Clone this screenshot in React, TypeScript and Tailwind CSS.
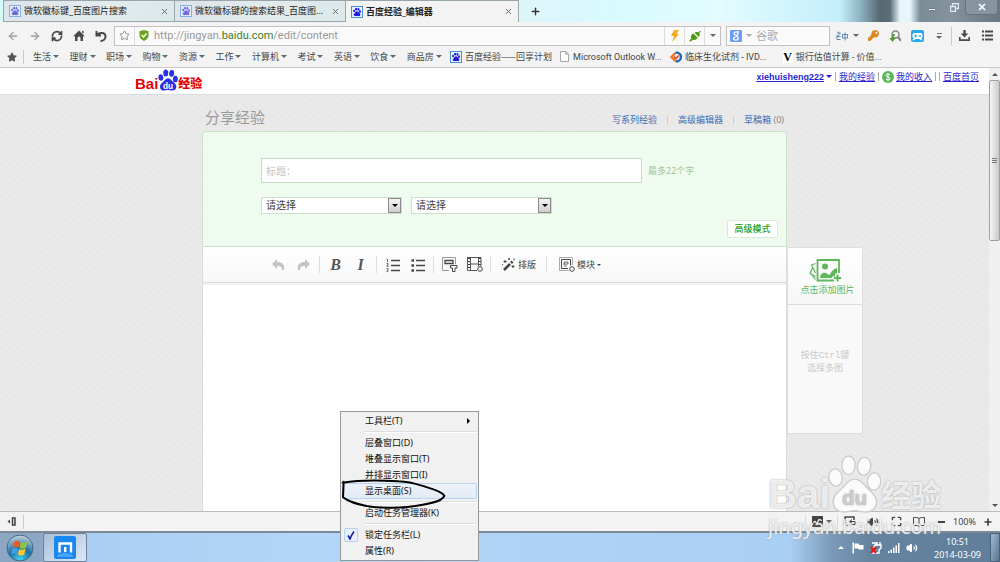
import { useState, type ReactNode } from 'react';
import { ArrowLeft, ArrowRight, Maximize, Plus, RefreshCw, Star, Volume2, X } from 'lucide-react';
import { FaKey, FaStar } from 'react-icons/fa';

interface Tab {
  id: number;
  title: string;
}

const TABS: Tab[] = [
  { id: 1, title: '微软徽标键_百度图片搜索' },
  { id: 2, title: '微软徽标键的搜索结果_百度图...' },
  { id: 3, title: '百度经验_编辑器' },
];

const FOLDERS = ['生活', '理财', '职场', '购物', '资源', '工作', '计算机', '考试', '英语', '饮食', '商品房'];

function PawShape() {
  return (
    <>
      <ellipse cx="285" cy="110" rx="20" ry="26" transform="rotate(-8 285 110)" />
      <ellipse cx="324" cy="73" rx="20" ry="28" />
      <ellipse cx="371" cy="76" rx="20" ry="27" transform="rotate(8 371 76)" />
      <ellipse cx="401" cy="122" rx="20" ry="26" transform="rotate(4 401 122)" />
      <path d="M342 115c-20 0-28 20-42 32-18 14-22 22-22 38 0 18 14 29 32 29 12 0 20-4 32-4s20 4 34 4c20 0 33-12 33-30 0-16-10-26-24-38-14-12-21-31-43-31z" />
    </>
  );
}

function Favicon({ faded }: { faded?: boolean }) {
  return (
    <svg viewBox="0 0 12 12" className={`size-3 shrink-0 ${faded ? 'opacity-60' : ''}`}>
      <rect x="0.5" y="0.5" width="11" height="11" fill="#e8f2ff" stroke="#4a90d9" />
      <svg x="2" y="1.5" width="8" height="9" viewBox="262 42 160 175" fill="#2319dc">
        <PawShape />
      </svg>
    </svg>
  );
}

function Caret({ className = 'text-[#666]' }: { className?: string }) {
  return (
    <svg viewBox="0 0 6 3" className={`h-[3px] w-[6px] shrink-0 ${className}`} fill="currentColor">
      <path d="M0 0h6L3 3z" />
    </svg>
  );
}

function IconButton({ label, className, children }: { label: string; className: string; children: ReactNode }) {
  return (
    <button type="button" aria-label={label} className={`flex shrink-0 items-center justify-center ${className}`}>
      {children}
    </button>
  );
}

function TitleBar() {
  const [active, setActive] = useState(3);

  return (
    <div className="flex h-[22px] shrink-0 bg-[linear-gradient(90deg,#d5fbf9_0,#dff4f8_50%,#d8fbff_62%,#e2fcff_72%,#c4eefb_84%,#8fb4c3_86%,#566872_88%,#5b6d78_89%,#e8f6fb_90%,#e8f6fb_91%,#7b8c97_92%,#84939d_95%,#687782_100%)] pl-[3px]">
      {TABS.map((tab) => (
        <div
          key={tab.id}
          className={`flex shrink-0 items-center border-t border-l border-[#98a6ab] pr-[4px] pl-[5px] ${
            tab.id === active
              ? 'w-[174px] border-r bg-[#f3f3f3]'
              : 'w-[171px] border-b bg-[linear-gradient(90deg,#dde4ea,#e2ebed_55%,#dce8ea)]'
          }`}
        >
          <button type="button" onClick={() => setActive(tab.id)} className="flex min-w-0 flex-1 items-center gap-[3px]">
            <Favicon faded={tab.id !== active} />
            <span className={`truncate text-[9px] leading-[12px] text-[#222] ${tab.id === active ? 'font-bold' : ''}`}>
              {tab.title}
            </span>
          </button>
          <IconButton label="关闭标签页" className="size-3 text-[#666]">
            <X className="size-[9px]" strokeWidth={2.5} />
          </IconButton>
        </div>
      ))}
      <IconButton label="新标签页" className="w-8 text-[#333]">
        <Plus className="size-[11px]" strokeWidth={3} />
      </IconButton>
      <div className="ml-auto flex h-[15px] pr-[2px] text-white">
        <IconButton label="最小化" className="w-[22px]">
          <span className="mt-1 h-[3px] w-2 rounded-sm border border-[#66757f] bg-white" />
        </IconButton>
        <IconButton label="还原" className="w-[22px]">
          <svg viewBox="0 0 9 9" className="size-[9px]" fill="none" stroke="#e6edf2">
            <path d="M2.500 2.500v-2h6v5h-2M0.500 3.500h5v5h-5z" strokeWidth="1.300" />
          </svg>
        </IconButton>
        <IconButton label="关闭" className="w-[33px] rounded-b-sm border border-t-0 border-[#66747d] bg-[#8795a0]">
          <X className="size-[10px]" strokeWidth={4} />
        </IconButton>
      </div>
    </div>
  );
}

function AddressBar() {
  return (
    <div className="flex h-[24px] shrink-0 items-center pt-[3px] text-[#4a4a4a]">
      <div className="flex w-[114px] shrink-0 pl-[2px]">
        <IconButton label="后退" className="w-[22px] text-[#aaa]">
          <ArrowLeft className="size-[12px]" strokeWidth={3.5} />
        </IconButton>
        <IconButton label="前进" className="w-[22px] text-[#aaa]">
          <ArrowRight className="size-[12px]" strokeWidth={3.5} />
        </IconButton>
        <IconButton label="刷新" className="w-[22px]">
          <RefreshCw className="size-[12px]" strokeWidth={3.5} />
        </IconButton>
        <IconButton label="主页" className="w-[22px]">
          <svg viewBox="0 0 12 12" className="size-3" fill="currentColor">
            <path d="M6 0.500L11.800 6.300H10V11H7.500V8a1.500 1.500 0 0 0-3 0V11H2V6.300H0.200zM9 1h1.500v3L9 2.500z" />
          </svg>
        </IconButton>
        <IconButton label="撤销关闭" className="w-[22px]">
          <svg viewBox="0 0 12 12" className="size-3" fill="none" stroke="currentColor" strokeWidth="2">
            <path d="M1.500 1v4.500H6M2 5c2-2.500 8-3 8.500 1 .3 3-2 5-5 5" />
          </svg>
        </IconButton>
      </div>
      <div className="flex h-[20px] min-w-0 flex-1 items-center border border-[#c3c3c3] bg-[#fafafa]">
        <IconButton label="收藏" className="w-[19px] text-[#888]">
          <Star className="size-[11px]" strokeWidth={2} />
        </IconButton>
        <div className="flex h-full flex-1 items-center gap-[5px] border-l border-[#ddd] pl-[4px]">
          <svg viewBox="0 0 10 11" className="h-[11px] w-[10px]">
            <path d="M5 0l4.500 1.300V5.500C9.500 8 7.500 10 5 11 2.500 10 0.500 8 0.500 5.500V1.300z" fill="#6aa51c" />
            <path d="M2.700 5l1.800 2 3-3.500" fill="none" stroke="#fff" strokeWidth="1.400" />
          </svg>
          <a href="http://jingyan.baidu.com/edit/content" className="font-['Roboto'] text-[11px] leading-[14px] text-[#999]">
            http://jingyan.<span className="text-[#3f7d1c]">baidu.com</span>/edit/content
          </a>
        </div>
        <IconButton label="加速" className="h-full w-[20px] border-l border-[#ddd]">
          <svg viewBox="0 0 10 12" className="h-[12px] w-[10px]" fill="#f0ad1e">
            <path d="M4 0h5L6.500 4H9L2 12l2-6H1z" />
          </svg>
        </IconButton>
        <IconButton label="连接" className="h-full w-[20px] border-l border-[#ddd]">
          <svg viewBox="0 0 12 12" className="size-3" fill="#4f9a14">
            <path d="M0.300 10.500l2-2.200c-1-2 .2-4.300 2.200-4.800l4 4c-.5 2-2.800 3.200-4.800 2.200l-2 2z" />
            <path d="M5.500 2.800c1-1 2.700-1.200 4-.5l1.500-1.600.9.900-1.600 1.500c.7 1.300.5 3-.5 4z" />
          </svg>
        </IconButton>
        <IconButton label="更多" className="h-full w-[16px] border-l border-[#ddd]">
          <Caret />
        </IconButton>
      </div>
      <div className="ml-[5px] flex h-[20px] w-[104px] shrink-0 items-center gap-[4px] border border-[#c3c3c3] bg-[#fafafa] pl-[3px]">
        <svg viewBox="0 0 12 12" className="size-3 shrink-0">
          <rect width="12" height="12" rx="1" fill="#6c9bf0" />
          <path
            d="M9 1.800H6.200c-1.300 0-2.200.7-2.200 1.800s.8 1.700 1.900 1.700S8 4.600 8 3.500 7.300 1.900 6.500 1.900M6 5.300c0 1 2.300 1.200 2.300 2.900 0 1.200-1.100 1.900-2.500 1.900s-2.300-.6-2.300-1.500c0-1.200 1.500-1.600 3-1.600"
            fill="none"
            stroke="#fff"
            strokeWidth="1.200"
          />
        </svg>
        <Caret className="text-[#aaa]" />
        <input
          aria-label="搜索"
          placeholder="谷歌"
          className="w-full min-w-0 bg-transparent text-[11px] leading-[14px] outline-none placeholder:text-[#aaa]"
        />
      </div>
      <div className="flex h-full shrink-0 items-center pr-[2px] pl-[3px]">
        <IconButton label="翻译" className="w-[29px] gap-[5px] text-[#5f8bb5]">
          <svg viewBox="0 0 12 10" className="h-[10px] w-[12px]" fill="none" stroke="currentColor">
            <path d="M1 2h3.500M2.500 0.500v1.500M4.500 2L1 5.500h3.500M1 4v4.500h3.500M6.500 3.500h5v3.500h-5zM9 1.500v8" />
          </svg>
          <Caret />
        </IconButton>
        <IconButton label="密码" className="w-[22px] text-[#d98a1e]">
          <FaKey className="size-[11px] -scale-x-100 rotate-90" />
        </IconButton>
        <IconButton label="嗅探" className="w-[22px] text-[#777]">
          <svg viewBox="0 0 12 12" className="size-3" fill="none">
            <circle cx="6.500" cy="4.500" r="3.500" stroke="#888" strokeWidth="1.500" />
            <path d="M9 7l3 4" stroke="#777" strokeWidth="2" />
            <path d="M6 4c-3 0-3.500 2-3.500 4H0.500l3 4 3-4H4.500c0-2 .5-2.500 1.500-2.500z" fill="#4f9a34" />
          </svg>
        </IconButton>
        <IconButton label="游戏" className="w-[22px]">
          <svg viewBox="0 0 13 12" className="h-3 w-[13px]">
            <rect width="13" height="12" rx="2" fill="#2ba7ee" />
            <rect x="1.500" y="3" width="10" height="5.500" rx="2" fill="#fff" />
            <path d="M2 10l3-2h3l3 2" stroke="#fff" strokeWidth="1.400" fill="none" />
            <path d="M3 6h3M4.500 4.500v3" stroke="#2ba7ee" />
            <circle cx="9" cy="6" r="1" fill="#2ba7ee" />
          </svg>
        </IconButton>
        <IconButton label="扩展" className="w-[22px] flex-col gap-[2px]">
          <span className="h-px w-[5px] bg-[#777]" />
          <Caret />
        </IconButton>
        <span className="ml-px h-[18px] w-px bg-[#ccc]" />
        <IconButton label="下载" className="w-[24px]">
          <svg viewBox="0 0 11 11" className="size-[11px]" fill="currentColor">
            <path d="M4.300 0h2.400v3.500h2.600L5.500 7.500 1.700 3.500h2.600zM0 7h1.600v2.300h7.800V7H11v4H0z" />
          </svg>
        </IconButton>
        <IconButton label="菜单" className="w-[22px]">
          <svg viewBox="0 0 11 11" className="size-[11px]" fill="currentColor">
            <path d="M0 0.500h2v2H0zM3 0.500h8v2H3zM0 4.500h2v2H0zM3 4.500h8v2H3zM0 8.500h2v2H0zM3 8.500h8v2H3z" />
          </svg>
        </IconButton>
      </div>
    </div>
  );
}

function BookmarkBar() {
  return (
    <div className="flex h-[22px] shrink-0 items-center border-b border-[#c9c9c9] font-['Roboto','Noto_Sans_CJK_SC',sans-serif] text-[9px] leading-[12px] whitespace-nowrap text-[#444]">
      <IconButton label="收藏夹" className="w-[23px] text-[#555]">
        <FaStar className="size-[10px]" />
      </IconButton>
      <span className="h-[14px] w-px bg-[#ccc]" />
      <nav className="ml-[9px] flex w-[409px] shrink-0 justify-between">
        {FOLDERS.map((name) => (
          <button key={name} type="button" className="flex items-center gap-[2px]">
            {name}
            <Caret />
          </button>
        ))}
      </nav>
      <a href="#plan" className="ml-[8px] flex items-center gap-[3px] font-['Noto_Sans_CJK_SC',sans-serif]">
        <Favicon />
        百度经验——回享计划
      </a>
      <a href="#outlook" className="ml-[8px] flex items-center gap-[4px]">
        <svg viewBox="0 0 10 12" className="h-[11px] w-[9px]" fill="#fff" stroke="#999">
          <path d="M0.500 0.500h6l3 3v8h-9zM6.500 0.500v3h3" />
        </svg>
        Microsoft Outlook W...
      </a>
      <a href="#ivd" className="ml-[8px] flex items-center gap-[3px]">
        <svg viewBox="0 0 12 12" className="size-3" fill="none" strokeWidth="2.400">
          <path d="M6 1.500L1.500 6 6 10.500" stroke="#e8762b" />
          <path d="M6 1.500c3 0 5 2 5 4.500s-2 4.500-5 4.500" stroke="#2767b5" />
          <path d="M4 5.500l2 2 3-3" stroke="#e8452b" strokeWidth="1.600" />
        </svg>
        临床生化试剂 - IVD...
      </a>
      <a href="#bank" className="ml-[16px] flex items-center gap-[3px]">
        <span className="w-[10px] bg-white text-center font-['Liberation_Serif'] text-[12px] leading-[12px] font-bold text-black">V</span>
        银行估值计算 - 价值...
      </a>
    </div>
  );
}

function Pipe() {
  return <span className="h-[9px] w-px bg-[#aaa]" />;
}

function SiteHeader() {
  return (
    <header className="flex h-[27px] shrink-0 justify-between border-b border-[#ddd] bg-white pr-[10px] pl-[135px]">
      <a href="#home" aria-label="百度经验" className="flex items-end pb-[3px] font-bold text-[#e10602]">
        <span className="font-['Liberation_Sans'] text-[15px] leading-[14px]">Bai</span>
        <svg viewBox="262 42 160 175" className="h-[22px] w-[20px]" fill="#2932e1">
          <PawShape />
          <text x="342" y="200" textAnchor="middle" fill="#fff" fontSize="66" fontWeight="700" fontFamily="Liberation Sans">
            du
          </text>
        </svg>
        <span className="text-[12px] leading-[15px] font-black">经验</span>
      </a>
      <nav className="flex h-[17px] items-center gap-[3px] text-[9px] leading-[12px] text-[#2a1fd0]">
        <a href="#user" className="flex items-center gap-[2px] font-['Liberation_Sans'] font-bold underline">
          xiehuisheng222
          <Caret className="text-[#2a1fd0]" />
        </a>
        <Pipe />
        <a href="#exp" className="underline">我的经验</a>
        <Pipe />
        <a href="#income" className="flex items-center gap-[2px] underline">
          <svg viewBox="0 0 12 12" className="size-3">
            <circle cx="6" cy="6" r="6" fill="#5cb85a" />
            <path d="M8 3.800C7 2.800 4 2.800 4 4.500s4 1.300 4 3S5 9.200 4 8.200M6 2v8" stroke="#fff" fill="none" />
          </svg>
          我的收入
        </a>
        <Pipe />
        <Pipe />
        <a href="#index" className="underline">百度首页</a>
      </nav>
    </header>
  );
}

function Dropdown({ label }: { label: string }) {
  return (
    <div className="relative h-[17px] w-[141px]">
      <select
        aria-label={label}
        className="block h-full w-full appearance-none border border-[#cbe2ca] bg-white pl-[4px] text-[10px] leading-[15px] text-[#444] outline-none"
      >
        <option>请选择</option>
      </select>
      <span className="pointer-events-none absolute inset-y-px right-px flex w-[13px] items-center justify-center border border-[#8a8a8a] bg-linear-to-b from-[#f4f4f4] to-[#cfcfcf]">
        <Caret className="text-black" />
      </span>
    </div>
  );
}

function Divider() {
  return (
    <span className="flex w-[7px] shrink-0 justify-center">
      <span className="h-[17px] w-px bg-[#ddd]" />
    </span>
  );
}

function EditorToolbar() {
  return (
    <div className="flex h-[36px] items-center border-b border-[#ddd] bg-linear-to-b from-white to-[#f7f7f7] pl-[63px] text-[#444]">
      <IconButton label="撤销" className="w-[25px] text-[#c4c4c4]">
        <svg viewBox="0 0 13 12" className="h-[12px] w-[13px]" fill="currentColor">
          <path d="M5 0v3c5 0 8 2 7 8h-2c0-3-1-4-5-4v3L0 5z" />
        </svg>
      </IconButton>
      <IconButton label="重做" className="w-[25px] text-[#c4c4c4]">
        <svg viewBox="0 0 13 12" className="h-[12px] w-[13px]" fill="currentColor">
          <path d="M8 0v3c-5 0-8 2-7 8h2c0-3 1-4 5-4v3l5-5z" />
        </svg>
      </IconButton>
      <Divider />
      <IconButton label="加粗" className="w-[25px] font-['Liberation_Serif'] text-[16px] leading-[18px] font-bold text-[#555] italic">
        B
      </IconButton>
      <IconButton label="斜体" className="w-[25px] font-['Liberation_Serif'] text-[16px] leading-[18px] font-bold text-[#555] italic">
        I
      </IconButton>
      <Divider />
      <IconButton label="有序列表" className="w-[25px]">
        <svg viewBox="0 0 14 14" className="size-[14px]" fill="none" stroke="currentColor">
          <path d="M5 2.500h9M5 7.500h9M5 12.500h9" strokeWidth="1.600" />
          <path d="M0.500 1h1v3M0.500 5.500h1.500v1.500h-1v1.500h1.500M0.500 10.500h1.500v3h-1.500M1 12h1" strokeWidth="0.700" />
        </svg>
      </IconButton>
      <IconButton label="无序列表" className="w-[25px]">
        <svg viewBox="0 0 14 14" className="size-[14px]" fill="none" stroke="currentColor">
          <path d="M5 2.500h9M5 7.500h9M5 12.500h9" strokeWidth="1.600" />
          <path d="M0.500 2.500h2.500M0.500 7.500h2.500M0.500 12.500h2.500" strokeWidth="2.500" />
        </svg>
      </IconButton>
      <Divider />
      <IconButton label="插入标题" className="w-[25px]">
        <svg viewBox="0 0 16 15" className="h-[15px] w-[16px]" fill="none" stroke="currentColor">
          <path d="M7 13.500H0.500v-13h13V7" stroke="#999" />
          <path d="M3 3.500h8v3H3z" strokeWidth="1.300" />
          <path d="M8.500 8.500h6.500v2.500h-2v3.500h-2.500v-3.500h-2z" fill="#fff" />
        </svg>
      </IconButton>
      <IconButton label="插入视频" className="w-[25px]">
        <svg viewBox="0 0 16 15" className="h-[15px] w-[16px]" fill="none" stroke="currentColor">
          <path d="M3.500 0.500v13M11.500 0.500v9M3.500 7h8M0.500 0.500h13.500v9M0.500 0v13.500h9.500" strokeWidth="0.900" />
          <path d="M2 1v12M13 1v9" strokeWidth="2" strokeDasharray="1 2" />
          <circle cx="13" cy="12" r="2.300" fill="#fff" />
        </svg>
      </IconButton>
      <Divider />
      <button type="button" className="flex w-[49px] items-center gap-[3px] pl-[8px] text-[9px] leading-[12px]">
        <svg viewBox="0 0 13 13" className="size-[13px]" fill="none" stroke="currentColor">
          <path d="M2 12L8 6" strokeWidth="2.600" />
          <path d="M9 5l1.500-1.500" strokeWidth="2.600" />
          <path d="M3 2v3M1.500 3.500h3M7 0v2M6 1h2M11 7v3M9.500 8.500h3M12 0.500v2M0.500 6v1" />
        </svg>
        排版
      </button>
      <Divider />
      <button type="button" className="flex items-center gap-[2px] pl-[9px] text-[9px] leading-[12px]">
        <svg viewBox="0 0 16 15" className="h-[15px] w-[16px]" fill="none" stroke="currentColor">
          <path d="M10 13.500H0.500v-13h13V8" stroke="#aaa" />
          <path d="M9 11.500H2.500v-9h9v6" />
          <path d="M5 5h4M5 7h4M5 9h3M5 5v3M9 5v2" strokeWidth="0.800" />
          <circle cx="13" cy="12" r="2.300" fill="#fff" />
        </svg>
        模块
        <svg viewBox="0 0 4 2" className="h-[2px] w-[4px]" fill="currentColor">
          <path d="M0 0h4L2 2z" />
        </svg>
      </button>
    </div>
  );
}

function SidePanel() {
  return (
    <aside className="h-[187px] w-[76px] rounded-tr border border-[#dedede] bg-[#f9f9f9]">
      <button
        type="button"
        className="flex h-[57px] w-full flex-col items-center justify-center gap-px border-b border-[#ddd] bg-linear-to-b from-white to-[#f7f7f7] pt-[2px] pl-[5px] text-[9px] leading-[13px] text-[#5cb85a]"
      >
        <svg viewBox="0 0 32 23" className="mr-[6px] h-[23px] w-[32px]" fill="none" stroke="#5cb85a">
          <path d="M30 14V1H8.500v20.500H25" strokeWidth="1.800" />
          <path d="M6.500 4.500L2.500 6l4 8M4 8l-3 6.500 5.500 3M2 14.500l4.500 6" strokeWidth="1.200" />
          <circle cx="16" cy="7.500" r="3" fill="#5cb85a" stroke="none" />
          <path d="M11 19c0-4 3-6 6-5l3 2c2-1 3-6 8-7v5.500h-2v3h-3V19z" fill="#5cb85a" stroke="none" />
          <path d="M28.500 15.500v7M25 19h7" strokeWidth="2" />
        </svg>
        点击添加图片
      </button>
      <p className="pt-[45px] text-center font-['Liberation_Mono','Noto_Sans_CJK_SC',monospace] text-[9px] leading-[13px] text-[#c9c9c9]">
        按住Ctrl键
        <br />
        选择多图
      </p>
    </aside>
  );
}

function EditorPage() {
  return (
    <main className="flex min-w-0 flex-1 flex-col bg-[#e9e9e9] bg-[repeating-linear-gradient(38deg,#e7e7e7_0,#ebebeb_2px,#e9e9e9_3px,#e7e7e7_5px)]">
      <SiteHeader />
      <div className="grid flex-1 grid-cols-[1fr_585px_1fr] grid-rows-[auto_1fr]">
        <section className="col-start-2">
          <div className="flex h-[36px] items-end justify-between pr-[3px] pb-[4px] pl-[3px]">
            <h1 className="text-[15px] leading-[20px] text-[#999]">分享经验</h1>
            <nav className="flex items-center gap-[10px] pb-px text-[9px] leading-[13px] text-[#3a6cb5]">
              <a href="#series">写系列经验</a>
              <span className="h-[8px] w-px bg-[#ccc]" />
              <a href="#advanced">高级编辑器</a>
              <span className="h-[8px] w-px bg-[#ccc]" />
              <a href="#drafts">
                草稿箱 <span className="text-[#888]">(0)</span>
              </a>
            </nav>
          </div>
          <form className="h-[116px] rounded-t border border-[#cbe2ca] bg-[#f0fbef] px-[8px] pt-[26px]">
            <div className="flex items-center gap-[6px] pl-[50px]">
              <input
                aria-label="标题"
                placeholder="标题："
                className="h-[25px] w-[381px] border border-[#c3dfc2] bg-white px-[4px] text-[10px] leading-[14px] outline-none placeholder:text-[#c4c4c4]"
              />
              <span className="text-[9px] leading-[13px] text-[#9fc79d]">最多22个字</span>
            </div>
            <div className="mt-[14px] flex gap-[9px] pl-[50px]">
              <Dropdown label="一级分类" />
              <Dropdown label="二级分类" />
            </div>
            <div className="mt-[6px] flex justify-end">
              <button
                type="button"
                className="h-[18px] w-[51px] rounded-xs border border-[#dbe8da] bg-white text-[9px] leading-[12px] font-medium text-[#22a022]"
              >
                高级模式
              </button>
            </div>
          </form>
        </section>
        <section className="col-start-2 border-x border-[#ddd] bg-white">
          <EditorToolbar />
          <div className="h-[2px] bg-[#f3f3f3]" />
        </section>
        <SidePanel />
      </div>
    </main>
  );
}

function ScrollBar() {
  return (
    <div className="flex w-[11px] shrink-0 flex-col items-center bg-[#f0f0f0]">
      <span className="flex h-[12px] items-center">
        <Caret className="rotate-180 text-[#555]" />
      </span>
      <span className="flex h-[161px] w-[11px] flex-col items-center justify-center gap-px rounded-xs border border-[#a0a0a0] bg-linear-to-r from-[#f6f6f6] to-[#c9c9cc]">
        <span className="h-px w-[5px] bg-[#777]" />
        <span className="h-px w-[5px] bg-[#777]" />
        <span className="h-px w-[5px] bg-[#777]" />
      </span>
      <span className="mt-auto flex h-[12px] items-center">
        <Caret className="text-[#555]" />
      </span>
    </div>
  );
}

function StatusBar() {
  return (
    <footer className="flex h-[22px] shrink-0 items-center border-t border-b-2 border-t-[#bbb] border-b-[#7d8a96] bg-[#f3f3f3] text-[9px] leading-[12px] text-[#444]">
      <IconButton label="侧边栏" className="w-[23px]">
        <svg viewBox="0 0 9 9" className="size-[9px]" fill="none" stroke="currentColor">
          <path d="M5.500 1h2.500v7H5.500z" strokeWidth="1.500" />
          <path d="M3 2.500v4L0.500 4.500z" fill="currentColor" stroke="none" />
        </svg>
      </IconButton>
      <span className="h-[14px] w-px bg-[#ccc]" />
      <div className="ml-auto flex items-center">
        <span className="h-[16px] w-px bg-[#ddd]" />
        <IconButton label="加速器" className="w-[31px] gap-[3px]">
          <svg viewBox="0 0 11 11" className="size-[11px]">
            <rect width="11" height="11" fill="#444" />
            <path d="M1 6.500l2-1 2 2 2-4 3 1" stroke="#fff" fill="none" strokeWidth="1.200" />
          </svg>
          <Caret />
        </IconButton>
        <span className="h-[16px] w-px bg-[#ddd]" />
        <IconButton label="分屏" className="w-[24px]">
          <svg viewBox="0 0 12 11" className="h-[11px] w-[12px]" fill="none" stroke="currentColor">
            <path d="M4 9H1V1h9v3" strokeWidth="1.500" />
            <path d="M5.500 8.500h5.500v-3H6M8 3.500l-2.500 2L8 7.500" />
          </svg>
        </IconButton>
        <IconButton label="声音" className="w-[22px]">
          <Volume2 className="size-[12px]" fill="currentColor" />
        </IconButton>
        <IconButton label="全屏" className="w-[24px]">
          <Maximize className="size-[11px]" strokeWidth={3} />
        </IconButton>
        <IconButton label="双栏" className="w-[22px]">
          <svg viewBox="0 0 12 10" className="h-[10px] w-[12px]" fill="none" stroke="currentColor">
            <path d="M6 1.500C5 0.500 3 0.500 0.500 0.500v8h4L6 9.500l1.500-1h4v-8C9 0.500 7 0.500 6 1.500v8" />
          </svg>
        </IconButton>
        <IconButton label="缩小" className="w-[23px]">
          <span className="h-[2px] w-[7px] bg-[#444]" />
        </IconButton>
        <span>100%</span>
        <IconButton label="放大" className="w-[24px]">
          <Plus className="size-[10px]" strokeWidth={4} />
        </IconButton>
      </div>
    </footer>
  );
}

function TaskBar() {
  return (
    <div className="flex h-[29px] shrink-0 bg-[linear-gradient(90deg,#8ba7c4_0,#8ba7c4_4%,#a9cdf2_6%,#b3d5f7_30%,#aacff4_79%,#7d9cba_83%,#65829e_87%,#607d99_100%)] text-white">
      <IconButton label="开始" className="w-[43px] pr-[4px]">
        <svg viewBox="0 0 28 28" className="size-[28px]">
          <defs>
            <radialGradient id="orb" cx="50%" cy="95%" r="90%">
              <stop offset="0" stopColor="#3fd0f5" />
              <stop offset="0.500" stopColor="#1e6fa5" />
              <stop offset="1" stopColor="#b9cad6" />
            </radialGradient>
          </defs>
          <circle cx="14" cy="14" r="13" fill="url(#orb)" stroke="#456781" />
          <path d="M8 8c2-1.500 4-1.500 6-.5l-1.500 6c-2-1-4-1-6 .5z" fill="#ee5a24" />
          <path d="M15 8c2 1 4 1 6.500-.5l-1.500 6c-2 1.500-4 1.500-6.500.5z" fill="#8cc63e" />
          <path d="M6.200 15c2-1.500 4-1.500 6-.5l-1.400 5.500c-2-1-4-1-6 .5z" fill="#3fa0e8" />
          <path d="M13.200 15c2 1 4 1 6.500-.5l-1.400 6c-2 1.500-4 1-6.500 0z" fill="#fdc82f" />
        </svg>
      </IconButton>
      <IconButton label="傲游浏览器" className="w-[44px] rounded-xs border border-[#6b8199] bg-linear-to-br from-[#a9bfd6] to-[#dbe9f7]">
        <svg viewBox="0 0 22 23" className="h-[23px] w-[22px]">
          <rect width="22" height="23" rx="2" fill="#1a86f0" />
          <path d="M3 21q1-4 4-3 4-3 8 0 3-1 4 3z" fill="#4aa5fa" />
          <path d="M5.500 16.500V7.500h11.500v9M11.200 16v-5" fill="none" stroke="#fff" strokeWidth="2.400" />
        </svg>
      </IconButton>
      <div className="ml-auto flex items-center">
        <IconButton label="显示隐藏的图标" className="w-[17px]">
          <Caret className="rotate-180 text-white" />
        </IconButton>
        <svg viewBox="0 0 12 12" className="mx-[3px] size-3" fill="#fff">
          <path d="M0.500 0.500h1.500v11H0.500zM2.500 1.500h4l1 1.500h4v4.500H7L6 6.500H2.500z" />
        </svg>
        <svg viewBox="0 0 12 13" className="mx-[3px] h-[13px] w-[12px]" fill="none">
          <path d="M2 2h4v3M7 1v3M10 1v3M5 4h6v3l-2 2v3H2z" stroke="#fff" strokeWidth="1.400" />
          <path d="M1 6l5 6M6 6l-5 6" stroke="#e01b1b" strokeWidth="2" />
        </svg>
        <svg viewBox="0 0 12 10" className="mx-[3px] h-[10px] w-[12px]" fill="#fff">
          <path d="M0 8h1.500v2H0zM2.500 6.500H4V10H2.500zM5 4.500h1.500V10H5zM7.500 2.500H9V10H7.500zM10 0h1.500v10H10z" />
        </svg>
        <Volume2 className="mx-[3px] size-[12px]" fill="#fff" />
        <p className="mr-[9px] ml-[13px] text-center text-[9px] leading-[13px]">
          10:51
          <br />
          2014-03-09
        </p>
        <span className="h-full w-[10px] border border-[#48617a] bg-linear-to-br from-[#a4b9cc] to-[#587591]" />
      </div>
    </div>
  );
}

function MenuItem({ label, active, checked, submenu }: { label: string; active?: boolean; checked?: boolean; submenu?: boolean }) {
  return (
    <button
      type="button"
      role={checked ? 'menuitemcheckbox' : 'menuitem'}
      aria-checked={checked}
      className={`flex h-[16px] w-full items-center rounded-xs border ${
        active ? 'border-[#b9d3f2] bg-linear-to-b from-[#eef2f8] to-[#e2ebf6]' : 'border-transparent'
      }`}
    >
      <span className="flex w-[22px] items-center pl-px">
        {checked && (
          <span className="flex size-[14px] items-center justify-center rounded-xs border border-[#b5d0f0] bg-[#e8f1fb] text-[#1a1a9c]">
            <svg viewBox="0 0 8 9" className="h-[9px] w-[8px]" fill="none" stroke="currentColor" strokeWidth="1.600">
              <path d="M1 4.500L3 8C4 5 5.500 2.500 7 0.500" />
            </svg>
          </span>
        )}
      </span>
      {label}
      {submenu && (
        <svg viewBox="0 0 3 6" className="mr-[6px] ml-auto h-[6px] w-[3px]">
          <path d="M0 0l3 3-3 3z" />
        </svg>
      )}
    </button>
  );
}

function MenuLine() {
  return <div className="my-[2px] ml-[22px] h-[2px] border-t border-b border-t-[#dedede] border-b-white" />;
}

function ContextMenu() {
  return (
    <div
      role="menu"
      className="absolute bottom-px left-[340px] w-[139px] border border-[#979797] bg-[#f1f1f1] px-px py-px text-[9px] leading-[12px] text-[#111]"
    >
      <MenuItem label="工具栏(T)" submenu />
      <MenuLine />
      <MenuItem label="层叠窗口(D)" />
      <MenuItem label="堆叠显示窗口(T)" />
      <MenuItem label="并排显示窗口(I)" />
      <MenuItem label="显示桌面(S)" active />
      <MenuLine />
      <MenuItem label="启动任务管理器(K)" />
      <MenuLine />
      <MenuItem label="锁定任务栏(L)" checked />
      <MenuItem label="属性(R)" />
      {/* Hand-drawn ring */}
      <svg
        viewBox="60 228 330 102"
        className="pointer-events-none absolute top-[65px] -left-px h-[34px] w-[110px]"
        fill="none"
        stroke="#000"
        strokeWidth="6"
        strokeLinecap="round"
        strokeLinejoin="round"
      >
        <path d="M71 242L69 289C88 304 112 309 140 315C175 321 230 322 262 318C310 312 368 304 373 284C366 270 330 262 305 254C280 246 260 242 235 241C180 237 110 238 68 245" />
      </svg>
    </div>
  );
}

function Watermark() {
  return (
    <div className="pointer-events-none absolute right-[54px] bottom-[21px] w-[178px] text-white/80 [text-shadow:0_0_2px_#999]">
      <div className="flex items-end">
        <span className="font-['Liberation_Sans'] text-[40px] leading-[38px] font-bold">Bai</span>
        <svg viewBox="262 42 160 175" className="-ml-[2px] h-[58px] w-[53px] shrink-0" fill="#fffc" stroke="#ccc" strokeWidth="4">
          <PawShape />
          <text x="342" y="194" textAnchor="middle" fill="#ccc" stroke="none" fontSize="62" fontWeight="700" fontFamily="Liberation Sans">
            du
          </text>
        </svg>
        <span className="text-[30px] leading-[36px] font-bold whitespace-nowrap">经验</span>
      </div>
      <p className="text-[20px] leading-[28px]">jingyan.baidu.com</p>
    </div>
  );
}

export default function App() {
  return (
    <div className="relative flex h-screen flex-col overflow-hidden bg-[#f3f3f3] font-['Noto_Sans','Noto_Sans_CJK_SC',sans-serif]">
      <TitleBar />
      <AddressBar />
      <BookmarkBar />
      <div className="flex min-h-0 flex-1">
        <EditorPage />
        <ScrollBar />
      </div>
      <StatusBar />
      <TaskBar />
      <ContextMenu />
      <Watermark />
    </div>
  );
}
